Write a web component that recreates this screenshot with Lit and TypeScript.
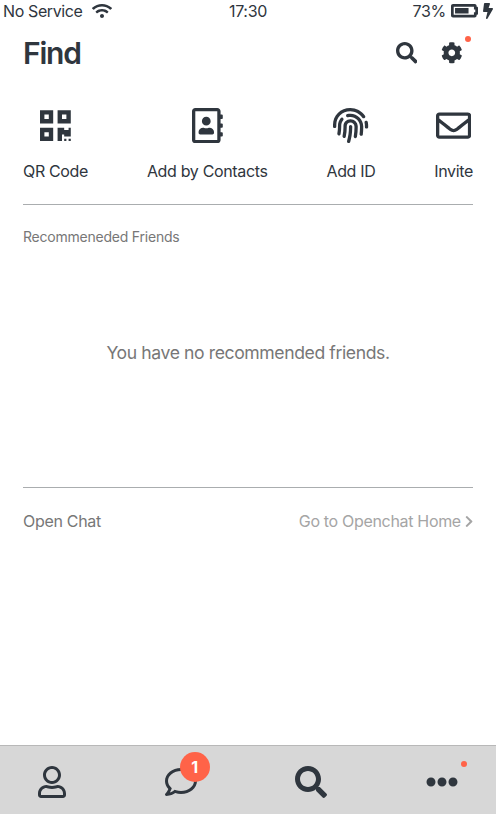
import { LitElement, html, css, svg } from "lit";
import { customElement, property } from "lit/decorators.js";

interface Glyph {
  box: string;
  d: string;
}

const glyphs: Record<string, Glyph> = {
  wifi: {
    box: "0 0 640 512",
    d: "M634.91 154.88C457.74-8.99 182.19-8.93 5.09 154.88c-6.66 6.16-6.79 16.59-.35 22.98l34.24 33.97c6.14 6.1 16.02 6.23 22.4.38 145.92-133.68 371.3-133.71 517.25 0 6.38 5.85 16.26 5.71 22.4-.38l34.24-33.97c6.43-6.39 6.3-16.82-.36-22.98zM320 352c-35.35 0-64 28.65-64 64s28.65 64 64 64 64-28.65 64-64-28.65-64-64-64zm202.67-83.59c-115.26-101.93-290.21-101.82-405.34 0-6.9 6.1-7.12 16.69-.57 23.15l34.44 33.99c6 5.92 15.66 6.32 22.05.8 83.95-72.57 209.74-72.41 293.49 0 6.39 5.52 16.05 5.13 22.05-.8l34.44-33.99c6.56-6.46 6.33-17.06-.56-23.15z",
  },
  battery: {
    box: "0 0 640 512",
    d: "M544 160v64h32v64h-32v64H64V160h480m16-64H48c-26.51 0-48 21.49-48 48v224c0 26.51 21.49 48 48 48h512c26.51 0 48-21.49 48-48v-16h8c13.255 0 24-10.745 24-24V184c0-13.255-10.745-24-24-24h-8v-16c0-26.51-21.49-48-48-48zm-144 96H96v128h320V192z",
  },
  bolt: {
    box: "0 0 320 512",
    d: "M296 160H180.6l42.6-129.8C227.2 15 215.7 0 200 0H56C44 0 33.8 8.9 32.2 20.8l-32 240C-1.7 275.2 9.5 288 24 288h118.7L96.6 482.5c-3.6 15.2 8 29.5 23.3 29.5 8.4 0 16.4-4.4 20.8-12l176-304c9.3-15.9-2.2-36-20.7-36z",
  },
  search: {
    box: "0 0 512 512",
    d: "M505 442.7L405.3 343c-4.5-4.5-10.6-7-17-7H372c27.6-35.3 44-79.7 44-128C416 93.1 322.9 0 208 0S0 93.1 0 208s93.1 208 208 208c48.3 0 92.7-16.4 128-44v16.3c0 6.4 2.5 12.5 7 17l99.7 99.7c9.4 9.4 24.6 9.4 33.9 0l28.3-28.3c9.4-9.4 9.4-24.6.1-34zM208 336c-70.7 0-128-57.2-128-128 0-70.7 57.2-128 128-128 70.7 0 128 57.2 128 128 0 70.7-57.2 128-128 128z",
  },
  cog: {
    box: "0 0 512 512",
    d: "M487.4 315.7l-42.6-24.6c4.3-23.2 4.3-47 0-70.2l42.6-24.6c4.9-2.8 7.1-8.6 5.5-14-11.1-35.6-30-67.8-54.7-94.6-3.8-4.1-10-5.1-14.8-2.3L380.8 110c-17.9-15.4-38.5-27.3-60.8-35.1V25.8c0-5.6-3.9-10.5-9.4-11.7-36.7-8.2-74.3-7.8-109.2 0-5.5 1.2-9.4 6.1-9.4 11.7V75c-22.2 7.9-42.8 19.8-60.8 35.1L88.7 85.5c-4.9-2.8-11-1.9-14.8 2.3-24.7 26.7-43.6 58.9-54.7 94.6-1.7 5.4.6 11.2 5.5 14L67.3 221c-4.3 23.2-4.3 47 0 70.2l-42.6 24.6c-4.9 2.8-7.1 8.6-5.5 14 11.1 35.6 30 67.8 54.7 94.6 3.8 4.1 10 5.1 14.8 2.3l42.6-24.6c17.9 15.4 38.5 27.3 60.8 35.1v49.2c0 5.6 3.9 10.5 9.4 11.7 36.7 8.2 74.3 7.8 109.2 0 5.5-1.2 9.4-6.1 9.4-11.7v-49.2c22.2-7.9 42.8-19.8 60.8-35.1l42.6 24.6c4.9 2.8 11 1.9 14.8-2.3 24.7-26.7 43.6-58.9 54.7-94.6 1.5-5.5-.7-11.3-5.6-14.1zM256 336c-44.1 0-80-35.9-80-80s35.9-80 80-80 80 35.9 80 80-35.9 80-80 80z",
  },
  qrcode: {
    box: "0 0 448 512",
    d: "M0 224h192V32H0v192zM64 96h64v64H64V96zm192-64v192h192V32H256zm128 128h-64V96h64v64zM0 480h192V288H0v192zm64-128h64v64H64v-64zm352-64h32v128h-96v-32h-32v96h-64V288h96v32h64v-32zm0 160h32v32h-32v-32zm-64 0h32v32h-32v-32z",
  },
  contacts: {
    box: "0 0 448 512",
    d: "M436 160c6.6 0 12-5.4 12-12v-40c0-6.6-5.4-12-12-12h-20V48c0-26.5-21.5-48-48-48H48C21.5 0 0 21.5 0 48v416c0 26.5 21.5 48 48 48h320c26.5 0 48-21.5 48-48v-48h20c6.6 0 12-5.4 12-12v-40c0-6.6-5.4-12-12-12h-20v-64h20c6.6 0 12-5.4 12-12v-40c0-6.6-5.4-12-12-12h-20v-64h20zm-68 304H48V48h320v416zM208 256c35.3 0 64-28.7 64-64s-28.7-64-64-64-64 28.7-64 64 28.7 64 64 64zm-89.6 128h179.2c12.4 0 22.4-8.6 22.4-19.2v-19.2c0-31.8-30.1-57.6-67.2-57.6-10.8 0-18.7 8-44.8 8-26.9 0-33.4-8-44.8-8-37.1 0-67.2 25.8-67.2 57.6v19.2c0 10.6 10 19.2 22.4 19.2z",
  },
  fingerprint: {
    box: "0 0 512 512",
    d: "M256.12 245.96c-13.25 0-24 10.74-24 24 1.14 72.25-8.14 141.9-27.7 211.55-2.73 9.72 2.15 30.49 23.12 30.49 10.48 0 20.11-6.92 23.09-17.52 13.53-47.91 31.04-125.41 29.48-224.52.01-13.25-10.73-24-23.99-24zm-.86-81.73C194 164.16 151.25 211.3 152.1 265.32c.75 47.94-3.75 95.91-13.37 142.55-2.69 12.98 5.67 25.69 18.64 28.36 13.05 2.67 25.67-5.66 28.36-18.64 10.34-50.09 15.17-101.58 14.37-153.02-.41-25.95 19.92-52.49 54.45-52.34 31.31.47 57.15 25.34 57.62 55.47.77 48.05-2.81 96.33-10.61 143.55-2.17 13.06 6.69 25.42 19.76 27.58 19.97 3.33 26.81-15.1 27.58-19.77 8.28-50.03 12.06-101.21 11.27-152.11-.88-55.8-47.94-101.88-104.91-102.72zm-110.69-19.78c-10.3-8.34-25.37-6.8-33.76 3.48-25.62 31.5-39.39 71.28-38.75 112 .59 37.58-2.47 75.27-9.11 112.05-2.34 13.05 6.31 25.53 19.36 27.89 20.11 3.5 27.07-14.81 27.89-19.36 7.19-39.84 10.5-80.66 9.86-121.33-.47-29.88 9.2-57.88 28-80.97 8.35-10.28 6.79-25.39-3.49-33.76zm109.47-62.33c-15.41-.41-30.87 1.44-45.78 4.97-12.89 3.06-20.87 15.98-17.83 28.89 3.06 12.89 16 20.83 28.89 17.83 11.05-2.61 22.47-3.77 34-3.69 75.43 1.13 137.73 61.5 138.88 134.58.59 37.88-1.28 76.11-5.58 113.63-1.5 13.17 7.95 25.08 21.11 26.58 16.72 1.95 25.51-11.88 26.58-21.11a929.06 929.06 0 0 0 5.89-119.85c-1.56-98.75-85.07-180.33-186.16-181.83zm252.07 121.45c-2.86-12.92-15.51-21.2-28.61-18.27-12.94 2.86-21.12 15.66-18.26 28.61 4.71 21.41 4.91 37.41 4.7 61.6-.11 13.27 10.55 24.09 23.8 24.2h.2c13.17 0 23.89-10.61 24-23.8.18-22.18.4-44.11-5.83-72.34zm-40.12-90.72C417.29 43.46 337.6 1.29 252.81.02 183.02-.82 118.47 24.91 70.46 72.94 24.09 119.37-.9 181.04.14 246.65l-.12 21.47c-.39 13.25 10.03 24.31 23.28 24.69.23.02.48.02.72.02 12.92 0 23.59-10.3 23.97-23.3l.16-23.64c-.83-52.5 19.16-101.86 56.28-139 38.76-38.8 91.34-59.67 147.68-58.86 69.45 1.03 134.73 35.56 174.62 92.39 7.61 10.86 22.56 13.45 33.42 5.86 10.84-7.62 13.46-22.59 5.84-33.43z",
  },
  envelope: {
    box: "0 0 512 512",
    d: "M464 64H48C21.49 64 0 85.49 0 112v288c0 26.51 21.49 48 48 48h416c26.51 0 48-21.49 48-48V112c0-26.51-21.49-48-48-48zm0 48v40.805c-22.422 18.259-58.168 46.651-134.587 106.49-16.841 13.247-50.201 45.072-73.413 44.701-23.208.375-56.579-31.459-73.413-44.701C106.18 199.465 70.425 171.067 48 152.805V112h416zM48 400V214.398c22.914 18.251 55.409 43.862 104.938 82.646 21.857 17.205 60.134 55.186 103.062 54.955 42.717.231 80.509-37.199 103.053-54.947 49.528-38.783 82.032-64.401 104.947-82.653V400H48z",
  },
  user: {
    box: "0 0 448 512",
    d: "M313.6 304c-28.7 0-42.5 16-89.6 16-47.1 0-60.8-16-89.6-16C60.2 304 0 364.2 0 438.4V464c0 26.5 21.5 48 48 48h352c26.5 0 48-21.5 48-48v-25.6c0-74.2-60.2-134.4-134.4-134.4zM400 464H48v-25.6c0-47.6 38.8-86.4 86.4-86.4 14.6 0 38.3 16 89.6 16 51.7 0 74.9-16 89.6-16 47.6 0 86.4 38.8 86.4 86.4V464zM224 288c79.5 0 144-64.5 144-144S303.5 0 224 0 80 64.5 80 144s64.5 144 144 144zm0-240c52.9 0 96 43.1 96 96s-43.1 96-96 96-96-43.1-96-96 43.1-96 96-96z",
  },
  comment: {
    box: "0 0 512 512",
    d: "M256 32C114.6 32 0 125.1 0 240c0 47.6 19.9 91.2 52.9 126.3C38 405.7 7 439.1 6.5 439.5c-6.6 7-8.4 17.2-4.6 26S14.4 480 24 480c61.5 0 110-25.7 139.1-46.3C192 442.8 223.2 448 256 448c141.4 0 256-93.1 256-208S397.4 32 256 32zm0 368c-26.7 0-53.1-4.1-78.4-12.1l-22.7-7.2-19.5 13.8c-14.3 10.1-33.9 21.4-57.5 29 7.3-12.1 14.4-25.7 19.9-40.2l10.6-28.1-20.6-21.8C69.7 314.1 48 282.2 48 240c0-88.2 93.3-160 208-160s208 71.8 208 160-93.3 160-208 160z",
  },
  ellipsis: {
    box: "0 0 512 512",
    d: "M328 256c0 39.8-32.2 72-72 72s-72-32.2-72-72 32.2-72 72-72 72 32.2 72 72zm104-72c-39.8 0-72 32.2-72 72s32.2 72 72 72 72-32.2 72-72-32.2-72-72-72zm-352 0c-39.8 0-72 32.2-72 72s32.2 72 72 72 72-32.2 72-72-32.2-72-72-72z",
  },
  chevron: {
    box: "0 0 320 512",
    d: "M285.476 272.971L91.132 467.314c-9.373 9.373-24.569 9.373-33.941 0l-22.667-22.667c-9.357-9.357-9.375-24.522-.04-33.901L188.505 256 34.484 101.255c-9.335-9.379-9.317-24.544.04-33.901l22.667-22.667c9.373-9.373 24.569-9.373 33.941 0L285.475 239.03c9.373 9.372 9.373 24.568.001 33.941z",
  },
};

@customElement("app-icon")
export class AppIcon extends LitElement {
  @property() name = "search";

  static styles = css`
    :host { display: block; flex: none; }
    svg { display: block; height: 100%; width: auto; fill: currentColor; }
  `;

  render() {
    const g = glyphs[this.name];
    return html`<svg viewBox=${g.box} aria-hidden="true">${svg`<path d=${g.d}></path>`}</svg>`;
  }
}

@customElement("app-root")
export class AppRoot extends LitElement {
  static styles = css`
    :host {
      display: flex;
      flex-direction: column;
      height: 814px;
      box-sizing: border-box;
      background: #fff;
      color: #2f363e;
      font-family: Inter, "Liberation Sans", sans-serif;
      font-size: 16px;
      line-height: 20px;
      white-space: nowrap;
    }
    .status { display: grid; grid-template-columns: 1fr auto 1fr; height: 22px; padding: 0 3px; }
    .status div { display: flex; align-items: center; }
    .carrier { letter-spacing: -0.38px; gap: 9px; }
    .clock { letter-spacing: -0.3px; }
    .power { letter-spacing: -0.3px; justify-content: flex-end; gap: 5px; }
    .wifi { height: 16px; }
    .battery { height: 21.6px; }
    .bolt { height: 16px; }
    header { display: flex; justify-content: space-between; align-items: center; height: 62px; padding: 0 33px 0 23px; box-sizing: border-box; }
    h1 { margin: 0; font-size: 30px; line-height: 36px; font-weight: 600; letter-spacing: -1.2px; }
    .tools { display: flex; gap: 24px; }
    .tools app-icon { height: 21.6px; }
    .tool { position: relative; }
    .dot { position: absolute; width: 6px; height: 6px; border-radius: 50%; background: #ff6348; }
    .tool .dot { right: -8px; top: -6px; }
    main { flex: 1; padding: 0 23px; }
    .actions { display: flex; justify-content: space-between; padding-top: 24px; height: 96px; border-bottom: 1px solid #aaadaf; }
    .action { display: flex; flex-direction: column; align-items: center; gap: 18px; letter-spacing: -0.34px; }
    .action app-icon { height: 35.2px; }
    .friends { height: 282px; border-bottom: 1px solid #aaadaf; color: #777; }
    .friends h2 { margin: 0; padding-top: 22px; font-size: 14px; line-height: 20px; font-weight: 400; letter-spacing: -0.22px; }
    .friends p { margin: 0; padding-top: 95px; text-align: center; font-size: 17.6px; line-height: 22px; letter-spacing: -0.4px; }
    .chat { display: flex; justify-content: space-between; padding-top: 23px; color: #777; letter-spacing: -0.3px; }
    .link { display: flex; align-items: center; gap: 4px; color: #a5a5a5; letter-spacing: -0.32px; }
    .link app-icon { height: 13px; margin-top: 1px; }
    nav { display: flex; justify-content: space-between; align-items: center; height: 69px; box-sizing: border-box; padding: 4px 38px 0; border-top: 1px solid #b8b8b8; background: #d7d7d7; }
    .tab { position: relative; }
    .tab app-icon { height: 32px; }
    .badge { position: absolute; left: 15px; top: -14px; width: 30px; height: 30px; border-radius: 50%; background: #ff6348; color: #fff; font-weight: 700; line-height: 31px; text-align: center; }
    .tab .dot { right: -9px; top: -5px; }
  `;

  private actions = [
    { icon: "qrcode", label: "QR Code" },
    { icon: "contacts", label: "Add by Contacts" },
    { icon: "fingerprint", label: "Add ID" },
    { icon: "envelope", label: "Invite" },
  ];

  render() {
    return html`
      <div class="status">
        <div class="carrier"><span>No Service</span><app-icon class="wifi" name="wifi"></app-icon></div>
        <div class="clock">17:30</div>
        <div class="power">
          <span>73%</span><app-icon class="battery" name="battery"></app-icon><app-icon class="bolt" name="bolt"></app-icon>
        </div>
      </div>
      <header>
        <h1>Find</h1>
        <div class="tools">
          <div class="tool"><app-icon name="search"></app-icon></div>
          <div class="tool"><app-icon name="cog"></app-icon><span class="dot"></span></div>
        </div>
      </header>
      <main>
        <div class="actions">
          ${this.actions.map((a) => html`<div class="action"><app-icon name=${a.icon}></app-icon><span>${a.label}</span></div>`)}
        </div>
        <section class="friends">
          <h2>Recommeneded Friends</h2>
          <p>You have no recommended friends.</p>
        </section>
        <section class="chat">
          <span>Open Chat</span>
          <span class="link"><span>Go to Openchat Home</span><app-icon name="chevron"></app-icon></span>
        </section>
      </main>
      <nav>
        <div class="tab"><app-icon name="user"></app-icon></div>
        <div class="tab"><app-icon name="comment"></app-icon><span class="badge">1</span></div>
        <div class="tab"><app-icon name="search"></app-icon></div>
        <div class="tab"><app-icon name="ellipsis"></app-icon><span class="dot"></span></div>
      </nav>
    `;
  }
}
